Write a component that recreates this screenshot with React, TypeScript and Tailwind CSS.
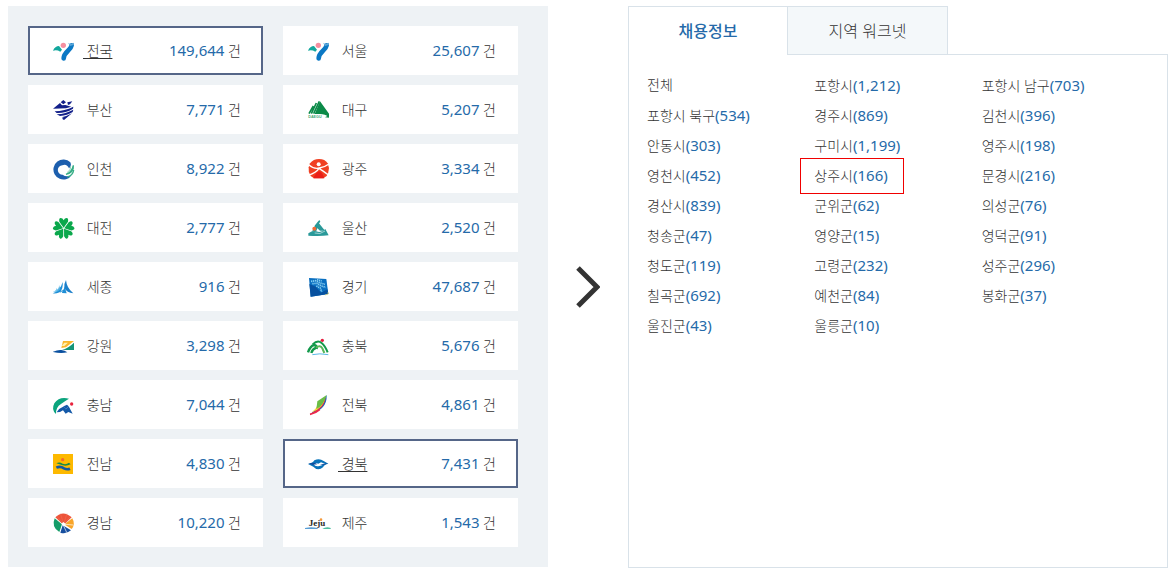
import { useState } from 'react';
import type { ReactNode } from 'react';
import clsx from 'clsx';

interface Region {
    id: string;
    name: string;
    count: string;
}

interface City {
    name: string;
    count?: string;
    marked?: boolean;
}

const REGIONS: Region[] = [
    { id: 'all', name: '전국', count: '149,644' },
    { id: 'seoul', name: '서울', count: '25,607' },
    { id: 'busan', name: '부산', count: '7,771' },
    { id: 'daegu', name: '대구', count: '5,207' },
    { id: 'incheon', name: '인천', count: '8,922' },
    { id: 'gwangju', name: '광주', count: '3,334' },
    { id: 'daejeon', name: '대전', count: '2,777' },
    { id: 'ulsan', name: '울산', count: '2,520' },
    { id: 'sejong', name: '세종', count: '916' },
    { id: 'gyeonggi', name: '경기', count: '47,687' },
    { id: 'gangwon', name: '강원', count: '3,298' },
    { id: 'chungbuk', name: '충북', count: '5,676' },
    { id: 'chungnam', name: '충남', count: '7,044' },
    { id: 'jeonbuk', name: '전북', count: '4,861' },
    { id: 'jeonnam', name: '전남', count: '4,830' },
    { id: 'gyeongbuk', name: '경북', count: '7,431' },
    { id: 'gyeongnam', name: '경남', count: '10,220' },
    { id: 'jeju', name: '제주', count: '1,543' },
];

const CITIES: City[] = [
    { name: '전체' },
    { name: '포항시', count: '1,212' },
    { name: '포항시 남구', count: '703' },
    { name: '포항시 북구', count: '534' },
    { name: '경주시', count: '869' },
    { name: '김천시', count: '396' },
    { name: '안동시', count: '303' },
    { name: '구미시', count: '1,199' },
    { name: '영주시', count: '198' },
    { name: '영천시', count: '452' },
    { name: '상주시', count: '166', marked: true },
    { name: '문경시', count: '216' },
    { name: '경산시', count: '839' },
    { name: '군위군', count: '62' },
    { name: '의성군', count: '76' },
    { name: '청송군', count: '47' },
    { name: '영양군', count: '15' },
    { name: '영덕군', count: '91' },
    { name: '청도군', count: '119' },
    { name: '고령군', count: '232' },
    { name: '성주군', count: '296' },
    { name: '칠곡군', count: '692' },
    { name: '예천군', count: '84' },
    { name: '봉화군', count: '37' },
    { name: '울진군', count: '43' },
    { name: '울릉군', count: '10' },
];

const seoulMark = (
    <>
        <path d="M9 38Q15 24 27 24L36 35L31 41Q20 34 9 38Z" fill="#12a79d" />
        <circle cx="40" cy="22" r="8" fill="#f58fa0" />
        <path d="M65 22C62 38 42 40 41 61" fill="none" stroke="#0b78c4" strokeWidth="14" strokeLinecap="round" />
        <path d="M54 14Q60 20 72 14L71 21L60 24Z" fill="#5aa5d8" />
    </>
);

// 지역별 심벌, 78x75 좌표계
const MARKS: Record<string, ReactNode> = {
    all: seoulMark,
    seoul: seoulMark,
    busan: (
        <g fill="#12208a">
            <path d="M9 35L30 18L36 25L46 24L64 29L48 34Z" />
            <path d="M40 9L48 16L40 22L32 16Z" />
            <path d="M52 16L67 13L60 22L54 24Z" />
            <path d="M14 43Q44 42 70 29L69 35Q46 49 20 48Z" />
            <path d="M20 52Q48 50 70 38L68 45Q52 56 30 57Z" />
            <path d="M35 61Q52 57 66 49L42 69L36 65L41 62Z" />
        </g>
    ),
    daegu: (
        <>
            <path d="M29 51L45 13L72 50V61Q60 51 45 51Z" fill="#0b8a48" />
            <path d="M12 50L25 27M19 50L34 18M26 50L43 13" stroke="#0b8a48" strokeWidth="5" />
            <path d="M60 61L71 55L72 62Z" fill="#0b8a48" />
            <text x="10" y="62" fontSize="11" fontWeight="700" fontFamily="Liberation Sans" fill="#3fa573">DAEGU</text>
        </>
    ),
    incheon: (
        <>
            <path d="M61 19A30 30 0 1 0 50 69Q60 66 64 58Q48 64 38 56A14 14 0 0 1 37 28Q50 22 57 37Q66 29 61 19Z" fill="#1d5fae" />
            <path d="M70 28Q72 50 48 55Q66 48 70 28Z" fill="#35ad85" stroke="#35ad85" strokeWidth="4" />
            <path d="M71 42Q69 58 52 63" fill="none" stroke="#35ad85" strokeWidth="4" />
            <path d="M62 30Q64 42 51 50" fill="none" stroke="#8ccfb6" strokeWidth="3" />
        </>
    ),
    gwangju: (
        <>
            <path d="M15 22Q25 9 42 9Q60 9 68 22L72 36Q71 52 65 60L55 67H27L17 60Q9 48 11 34Z" fill="#f04023" />
            <circle cx="41" cy="25" r="6" fill="#fff" />
            <path d="M12 27Q26 40 43 36Q60 33 72 24M10 58Q34 50 42 37Q52 43 72 58" fill="none" stroke="#fff" strokeWidth="4" />
            <path d="M25 67Q33 49 43 46Q52 48 58 67Z" fill="#ea1f18" />
        </>
    ),
    daejeon: (
        <g fill="#0ba84c">
            {[0, 72, 144, 216, 288].map((angle) => (
                <path key={angle} d="M41 38L28 20Q26 10 32 9Q38 9 41 16Q44 9 50 9Q56 10 54 20Z" transform={`rotate(${angle} 41 40)`} />
            ))}
        </g>
    ),
    ulsan: (
        <>
            <path d="M37 22L43 15L46 20L42 25L60 47L45 47L29 32Z" fill="#2a9999" />
            <path d="M10 55Q23 46 34 49Q48 56 61 42L71 61Q46 64 10 62Z" fill="#2a9999" />
            <path d="M21 50L31 29L38 37L34 48Z" fill="#2a9999" />
            <circle cx="28" cy="41" r="6" fill="#f26a36" />
            <path d="M29 54Q45 60 60 48" fill="none" stroke="#d8eeee" strokeWidth="2" />
        </>
    ),
    sejong: (
        <>
            <path d="M48 18Q50 42 70 58Q51 57 43 42Q42 28 48 18Z" fill="#1b7fca" />
            <path d="M38 24Q40 45 29 56Q40 52 44 38L50 58L36 57L38 47Q27 60 8 58Q31 50 38 24Z" fill="#1f8fd6" />
            <path d="M27 33Q29 46 12 55Q23 55 31 45Z" fill="#4fb0e3" />
            <path d="M20 42Q20 50 8 54Q18 54 24 48Z" fill="#6cc0ea" />
        </>
    ),
    gyeonggi: (
        <>
            <path d="M12 12L64 15L70 60L17 68Z" fill="#0a6fc0" />
            <path d="M13 30L17 68L70 60L67 46L48 56L32 38Z" fill="#07519f" />
            <g fill="none" stroke="#86cdf0" strokeWidth="5" strokeDasharray="4 2">
                <path d="M18 22L32 20L46 27L60 31" />
                <path d="M22 29L36 28L49 36L62 40" />
                <path d="M34 36L46 42L50 53" />
                <path d="M36 17L50 21" />
            </g>
            <path d="M60 63L70 60L69 54" fill="none" stroke="#e9d970" strokeWidth="2" />
        </>
    ),
    gangwon: (
        <>
            <path d="M39 24H72L48 43L34 45Z" fill="#fbb62b" />
            <path d="M72 29V51H36Q54 46 72 29Z" fill="#159477" />
            <path d="M43 29H54L43 39L35 39Z" fill="#fff1ae" />
            <path d="M9 56Q23 50 34 51Q44 52 52 58Q32 62 9 57Z" fill="#0a509f" />
        </>
    ),
    chungbuk: (
        <>
            <path d="M9 58Q16 38 28 36Q37 38 35 48M19 60Q22 48 34 44" fill="none" stroke="#12994b" strokeWidth="7" />
            <path d="M23 34Q38 19 50 30Q60 38 68 58" fill="none" stroke="#12994b" strokeWidth="6" />
            <path d="M33 44Q46 34 52 46L58 60" fill="none" stroke="#58b858" strokeWidth="6" />
            <circle cx="52" cy="22" r="5" fill="#e61b3d" />
            <path d="M22 65Q43 60 70 65" fill="none" stroke="#5bb9e7" strokeWidth="3" />
        </>
    ),
    chungnam: (
        <>
            <path d="M57 20Q28 12 13 34Q3 54 18 66Q17 46 33 36Q43 28 57 20Z" fill="#0ba47d" />
            <path d="M20 61Q28 48 42 43L47 52L56 43L68 65L55 60L47 65L39 55L30 60Z" fill="#1459a8" />
            <path d="M41 43L51 38L56 43L47 52Z" fill="#1459a8" />
            <circle cx="65" cy="36" r="5" fill="#e8243e" />
        </>
    ),
    jeonbuk: (
        <>
            <path d="M65 9Q67 53 15 67Q46 45 65 9Z" fill="#146ac0" />
            <path d="M62 14Q61 51 15 67Q42 49 46 45Z" fill="#e62946" />
            <path d="M61 14Q57 48 20 61Q33 52 36 43Z" fill="#ffd33a" />
            <path d="M65 9L37 28L34 51Q55 42 65 9Z" fill="#6abd45" />
            <path d="M15 67Q32 64 44 53" fill="none" stroke="#ee2649" strokeWidth="5" />
        </>
    ),
    jeonnam: (
        <>
            <path d="M9 9H69V69H9Z" fill="#fdb900" />
            <circle cx="38" cy="26" r="5" fill="#f26a2e" />
            <path d="M19 37Q28 31 38 38Q48 42 57 35L62 40Q50 46 38 43Z" fill="#178b46" />
            <path d="M19 50Q31 44 42 52Q51 57 60 53" fill="none" stroke="#1458a0" strokeWidth="8" />
        </>
    ),
    gyeongbuk: (
        <>
            <path d="M9 39Q24 36 28 28Q43 20 56 30L70 38Q58 40 54 49Q39 62 25 47Z" fill="#0873ba" />
            <path d="M26 40Q33 35 40 38L48 34L60 38Q50 43 43 45Q31 48 26 40Z" fill="#fff" />
            <path d="M10 37L30 36L37 40L23 41ZM45 40L70 37L55 42Z" fill="#11499a" />
        </>
    ),
    gyeongnam: (
        <>
            <path d="M37 41L16 22Q39 -1 65 22L45 41Z" fill="#ed5339" />
            <path d="M14 25L36 43L28 66Q3 52 14 25Z" fill="#159c68" />
            <path d="M47 40L67 25Q77 43 65 57L46 45Z" fill="#f9a528" />
            <path d="M38 46L63 61Q48 74 31 68Z" fill="#174f9f" />
            <path d="M41 42L31 10M41 42L51 10M41 42L20 18M41 42L62 19" stroke="#f48168" strokeWidth="1" />
            <path d="M41 48L50 67M48 43L69 45" stroke="#fff" strokeWidth="2" />
            <path d="M40 36L48 43L41 48L34 42Z" fill="#fff" />
        </>
    ),
    jeju: (
        <>
            <text x="11" y="49" fontSize="27" fontWeight="700" fontFamily="Liberation Serif" fill="#292929">Jeju</text>
            <circle cx="48" cy="29" r="4" fill="#f59a3c" />
            <path d="M0 54Q18 49 38 54V57H0Z" fill="#5a9ed5" />
            <path d="M52 57Q63 49 77 54V57Z" fill="#4fbfa1" />
        </>
    ),
};

const TABS = ['채용정보', '지역 워크넷'];

function RegionCard({ region, selected, onSelect }: { region: Region; selected: boolean; onSelect: () => void }) {
    return (
        <button
            type="button"
            onClick={onSelect}
            aria-pressed={selected}
            className={clsx(
                'flex h-[49px] cursor-pointer items-center border-2 bg-white px-5 text-left',
                selected ? 'border-[#556688]' : 'border-white',
            )}
        >
            <svg viewBox="0 0 78 75" className="mr-[7px] h-[25px] w-[26px] shrink-0" aria-hidden="true">
                {MARKS[region.id]}
            </svg>
            <span className={clsx('text-sm font-light whitespace-pre', selected && 'underline underline-offset-2')}>{` ${region.name}`}</span>
            <span className="ml-auto text-sm font-light whitespace-nowrap">
                <span className="text-[15px] font-normal text-[#256aa9]">{region.count}</span> 건
            </span>
        </button>
    );
}

function CityLink({ city }: { city: City }) {
    return (
        <a href="#" className="relative inline-block h-[30px] text-sm leading-7 font-light whitespace-nowrap">
            {city.name}
            {city.count && <span className="text-[15px] font-normal text-[#256aa9]">({city.count})</span>}
            {city.marked && <span className="absolute -inset-y-[3px] -right-4 -left-3.5 border border-[#f00000]" />}
        </a>
    );
}

export default function App() {
    const [selected, setSelected] = useState(['all', 'gyeongbuk']);
    const [tab, setTab] = useState(0);

    return (
        <main className="grid grid-cols-[minmax(0,1fr)_80px_minmax(0,1fr)] bg-white pt-1.5 pr-1.5 pb-3 pl-2 font-['Noto_Sans','Noto_Sans_CJK_KR',sans-serif] text-[#333333]">
            <section className="grid grid-cols-2 gap-x-5 gap-y-2.5 self-start bg-[#eef2f5] py-5 pr-[30px] pl-5">
                {REGIONS.map((region) => (
                    <RegionCard
                        key={region.id}
                        region={region}
                        selected={selected.includes(region.id)}
                        onSelect={() => setSelected(['all', region.id])}
                    />
                ))}
            </section>

            <div className="flex items-center justify-center">
                <svg viewBox="0 0 24 42" className="h-[42px] w-6" aria-hidden="true">
                    <path d="M2 2L21 21L2 40" fill="none" stroke="#333333" strokeWidth="5" />
                </svg>
            </div>

            <section className="-mb-px flex flex-col">
                <div role="tablist" className="flex h-[49px]">
                    {TABS.map((label, i) => (
                        <button
                            key={label}
                            type="button"
                            role="tab"
                            aria-selected={tab === i}
                            onClick={() => setTab(i)}
                            className={clsx(
                                'cursor-pointer border-t border-l border-[#d9e2e9] text-base',
                                i === TABS.length - 1 ? 'w-[161px] border-r' : 'w-[159px]',
                                tab === i ? 'bg-white font-medium text-[#256aa9]' : 'border-b bg-[#f4f8fa] font-light',
                            )}
                        >
                            {label}
                        </button>
                    ))}
                    <div className="flex-1 border-b border-[#d9e2e9]" />
                </div>
                <ul className="grid flex-1 grid-cols-3 content-start border-x border-b border-[#d9e2e9] px-[18px] py-4">
                    {CITIES.map((city) => (
                        <li key={city.name} className="h-[30px]">
                            <CityLink city={city} />
                        </li>
                    ))}
                </ul>
            </section>
        </main>
    );
}
